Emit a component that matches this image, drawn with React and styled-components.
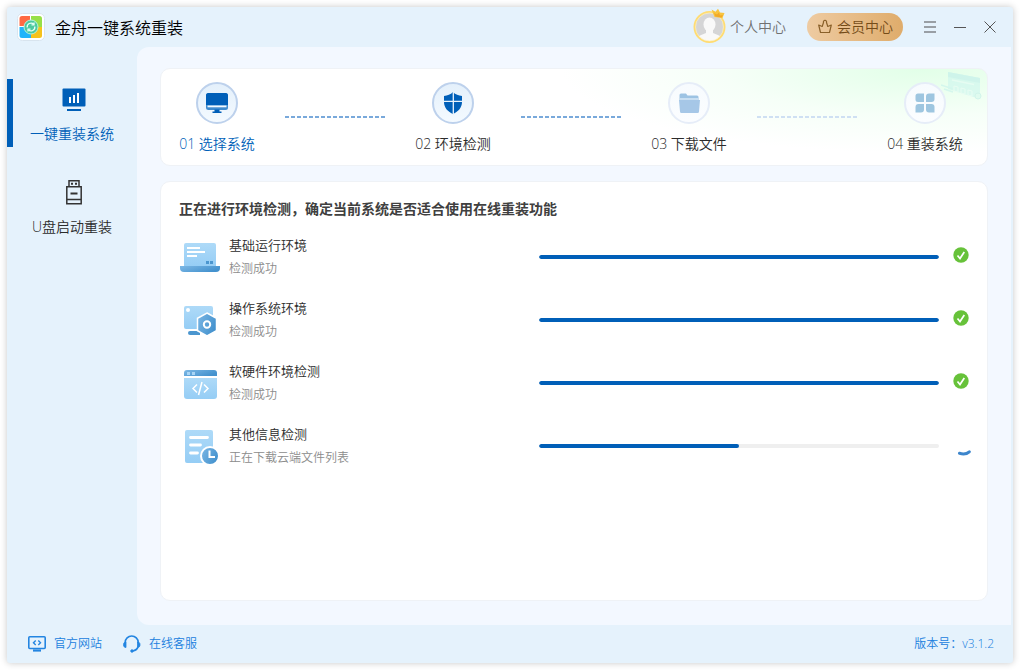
import React from 'react';
import styled, { createGlobalStyle, css } from 'styled-components';

const GlobalStyle = createGlobalStyle`
  :root {
    --primary: #005fb8;
    --link: #2080de;
    --chrome: #e5f2fc;
    --surface: #f3f8ff;
    --text: #2b2b2b;
    --muted: #8c8c8c;
  }

  * {
    box-sizing: border-box;
  }

  body {
    margin: 0;
    background: #ffffff;
    color: var(--text);
    font-family: 'Open Sans', 'Noto Sans CJK SC', sans-serif;
    font-size: 14px;
    font-weight: 350;
  }

  button {
    margin: 0;
    padding: 0;
    border: 0;
    background: none;
    color: inherit;
    font: inherit;
    cursor: pointer;
  }

  svg {
    display: block;
    flex: none;
  }
`;

const Page = styled.div`
  display: flex;
  min-height: 100vh;
  padding: 7px;
`;

const Window = styled.div`
  display: flex;
  flex: 1;
  flex-direction: column;
  min-width: 0;
  border-radius: 3px;
  background: var(--chrome);
  box-shadow: 0 0 7px rgba(0, 0, 0, 0.22);
`;

const Header = styled.header`
  display: flex;
  align-items: center;
  height: 40px;
  padding: 0 8px 0 10px;

  h1 {
    flex: 1;
    margin: 0 0 0 10px;
    padding-top: 2px;
    color: #000000;
    font-size: 16px;
    font-weight: inherit;
    line-height: 24px;
  }
`;

const UserButton = styled.button`
  display: flex;
  align-items: center;
  gap: 4px;
  margin-right: 21px;
  color: #707070;
  line-height: 20px;
`;

const VipButton = styled.button`
  display: flex;
  align-items: center;
  justify-content: center;
  gap: 4px;
  width: 96px;
  height: 28px;
  margin-right: 12px;
  border-radius: 14px;
  background: linear-gradient(90deg, #eecba2, #dfac6b);
  color: #754c18;
  line-height: 20px;
`;

const WindowButton = styled.button`
  display: flex;
  align-items: center;
  justify-content: center;
  width: 30px;
  height: 30px;
`;

const Body = styled.div`
  display: flex;
  flex: 1;
`;

const Sidebar = styled.nav`
  display: flex;
  flex-direction: column;
  gap: 25px;
  width: 130px;
  padding-top: 32px;
`;

const NavItem = styled.button`
  display: flex;
  flex-direction: column;
  align-items: center;
  gap: 10px;
  height: 68px;
  padding-top: 7px;
  line-height: 20px;

  ${({ $active }) =>
    $active &&
    css`
      color: var(--primary);
      box-shadow: inset 6px 0 0 var(--primary);
    `}
`;

const Content = styled.main`
  display: flex;
  flex: 1;
  flex-direction: column;
  gap: 15px;
  min-width: 0;
  margin-right: 2px;
  padding: 21px 23px 24px;
  border-radius: 12px 0 0 12px;
  background: var(--surface);
`;

const Card = styled.section`
  border: 1px solid #eff2f6;
  border-radius: 10px;
  background: #ffffff;
`;

const StepsCard = styled(Card)`
  position: relative;
  display: flex;
  justify-content: space-between;
  padding: 13px 23px 11px 17px;
  background: radial-gradient(ellipse 360px 84px at 92% 0, #e2ffe8, rgba(240, 255, 243, 0.6) 55%, rgba(255, 255, 255, 0)) #ffffff;
`;

const Decoration = styled.svg`
  position: absolute;
  top: 2px;
  right: 2px;
  opacity: 0.6;
`;

const Step = styled.div`
  position: relative;
  display: flex;
  flex-direction: column;
  align-items: center;
  gap: 10px;
  width: 78px;
  color: ${({ $current }) => ($current ? 'var(--primary)' : 'var(--text)')};
  line-height: 20px;
  white-space: nowrap;
`;

const StepCircle = styled.div`
  display: flex;
  align-items: center;
  justify-content: center;
  width: 42px;
  height: 42px;
  border: 2px solid ${({ $reached }) => ($reached ? '#bdd1ec' : '#e6edf8')};
  border-radius: 50%;
  background: ${({ $reached }) => ($reached ? 'linear-gradient(#e4f0fb, #f4faff)' : 'linear-gradient(#f7fbfe, #fbfdff)')};
`;

const StepLine = styled.div`
  width: 100px;
  height: 2px;
  margin-top: 34px;
  color: ${({ $reached }) => ($reached ? '#79a9db' : '#cfe0f3')};
  background: repeating-linear-gradient(
    90deg,
    currentColor 0 4px,
    transparent 4px 6px
  );
`;

const CheckCard = styled(Card)`
  flex: 1;
  padding: 17px 16px 17px 18px;

  h2 {
    margin: 0 0 18px;
    color: #404040;
    font-size: 14px;
    font-weight: bold;
    line-height: 20px;
  }
`;

const CheckList = styled.ul`
  display: flex;
  flex-direction: column;
  gap: 23px;
  margin: 0;
  padding: 0;
  list-style: none;
`;

const CheckRow = styled.li`
  display: grid;
  grid-template-columns: 40px 3fr 4fr 22px;
  column-gap: 10px;
  align-items: center;
  height: 40px;
`;

const CheckInfo = styled.div`
  display: flex;
  flex-direction: column;
  gap: 8px;
  line-height: 16px;

  label {
    font-size: 13px;
  }

  span {
    color: var(--muted);
    font-size: 12px;
  }
`;

const Progress = styled.progress`
  display: block;
  width: 100%;
  height: 4px;
  border: 0;
  border-radius: 2px;
  overflow: hidden;
  appearance: none;

  &::-webkit-progress-bar {
    background: #efefef;
  }

  &::-webkit-progress-value {
    border-radius: 2px;
    background: var(--primary);
  }
`;

const Footer = styled.footer`
  display: flex;
  align-items: center;
  gap: 20px;
  height: 38px;
  padding: 0 19px 0 20px;
  color: var(--link);
  font-size: 12px;
  line-height: 16px;

  span {
    margin-left: auto;
  }
`;

const FooterLink = styled.a`
  display: flex;
  align-items: center;
  gap: 8px;
  color: inherit;
  text-decoration: none;
`;

const Logo = () => (
  <svg width="28" height="28" viewBox="0 0 28 28">
    <rect x="0.5" y="0.5" width="27" height="27" rx="5" fill="#fff" stroke="#d8e4ee" />
    <path d="M5 3h8v10H2.500V5.500A2.500 2.500 0 0 1 5 3z" fill="#ff6a42" />
    <path d="M14 3h8.500A2.500 2.500 0 0 1 25 5.500V14H14z" fill="#97e048" />
    <path d="M2.500 14H14v11H5a2.500 2.500 0 0 1-2.500-2.500z" fill="#22b4fa" />
    <path d="M14 14h11v8.500a2.500 2.500 0 0 1-2.500 2.500H14z" fill="#f5c21c" />
    <circle cx="14" cy="14" r="7" fill="#4cc9a0" stroke="#b8f0dc" />
    <g fill="none" stroke="#e6fff5" strokeWidth="1.3">
      <path d="M10.200 14.500a3.800 3.800 0 0 1 6.500-3.200M17.800 13.500a3.800 3.800 0 0 1-6.500 3.200" />
      <path d="M17 9.500v2.300h-2.500M11 18.500v-2.300h2.500" />
    </g>
  </svg>
);

const Avatar = () => (
  <svg width="33" height="38" viewBox="0 0 33 38">
    <defs>
      <clipPath id="face">
        <circle cx="16.500" cy="19" r="14" />
      </clipPath>
    </defs>
    <circle cx="16.500" cy="19" r="15" fill="#d5d5d6" stroke="#ffdc72" strokeWidth="2" />
    <g clipPath="url(#face)" fill="#f9f9f9">
      <ellipse cx="16.500" cy="16.500" rx="6" ry="7" />
      <path d="M13 21h7v4l6 2.500c2 1 2 3 2 6H5c0-3 0-5 2-6l6-2.500z" />
    </g>
    <circle cx="16.500" cy="19" r="14" fill="none" stroke="#fff0bd" strokeWidth="0.700" />
    <path d="M18.500 1.500l4 2.300 2.500-3 2 3.700 4.500 0.500-2 5-8-1z" fill="#f8c43f" />
    <path d="M21 5l3 1.500 2-2 1 3 3-.5-1.500 2.500-6-1z" fill="#f2a928" />
  </svg>
);

const VipCrown = () => (
  <svg width="16" height="16" viewBox="0 0 16 16" fill="none" stroke="#8a602a" strokeWidth="1.200" strokeLinejoin="round">
    <path d="M3.500 13.500h9l1.800-7.500-3.500 1.500L9.500 3.500a1.600 1.600 0 1 0-3 0L5.200 7.500 1.700 6z" />
  </svg>
);

const MonitorChart = () => (
  <svg width="28" height="28" viewBox="0 0 28 28">
    <rect x="4.500" y="2.500" width="23" height="18" rx="1" fill="#005fb8" />
    <path d="M9 23h14v2H9z" fill="#005fb8" />
    <path d="M11 11h2v6h-2zM15 9h2v8h-2zM19 7h2v10h-2z" fill="#fff" />
  </svg>
);

const UsbDrive = () => (
  <svg width="28" height="28" viewBox="0 0 28 28" fill="none" stroke="#333" strokeWidth="1.500">
    <path d="M11 7.500V1.800h10v5.700M8.800 7.700h14.400v17.100H8.800zM8.800 20.500h14.400" />
    <path d="M13 4.800h2M17 4.800h2" strokeWidth="2" />
    <path d="M12.500 14.500h7" strokeWidth="2" />
  </svg>
);

const StepMonitor = () => (
  <svg width="24" height="24" viewBox="0 0 24 24">
    <rect x="1" y="2" width="22" height="17" rx="2.500" fill="#3f8bce" />
    <path d="M3.500 2h17A2.500 2.500 0 0 1 23 4.500V14H1V4.500A2.500 2.500 0 0 1 3.500 2z" fill="#005fb8" />
    <path d="M2.500 14.500h19v1.800h-19z" fill="#f2f9ff" />
    <path d="M9.500 18.500h5v2h2v1.500h-9v-1.500h2z" fill="#005fb8" />
  </svg>
);

const StepShield = () => (
  <svg width="24" height="24" viewBox="0 0 24 24">
    <path d="M12 1c2.500 2.500 5.500 3.700 9 4v6c0 5.500-3.500 9.500-9 12-5.500-2.500-9-6.500-9-12V5c3.500-.3 6.500-1.500 9-4z" fill="#005fb8" />
    <path d="M12.300 0v24M2 10.400h20" stroke="#e9f4fd" strokeWidth="1.300" />
  </svg>
);

const StepFolder = () => (
  <svg width="24" height="24" viewBox="0 0 24 24">
    <path d="M4 2.500h5l1.500 2H20a1.500 1.500 0 0 1 1.500 1.500v4h-19V4A1.500 1.500 0 0 1 4 2.500z" fill="#9dc3e3" />
    <path d="M3 7h18.500v3H3z" fill="#c9dff2" />
    <path d="M2 9h21l-1 11.500a1.500 1.500 0 0 1-1.500 1.500h-16A1.500 1.500 0 0 1 3 20.500z" fill="#a6c7e7" />
  </svg>
);

const StepTiles = () => (
  <svg width="24" height="24" viewBox="0 0 24 24" fill="#9ec6e0">
    <path d="M5 2.500h6v8.500H5a2.500 2.500 0 0 1-2.500-2.500V5A2.500 2.500 0 0 1 5 2.500z" />
    <path d="M13 5.500a3 3 0 0 1 3-3h5.500V8a3 3 0 0 1-3 3H13z" />
    <path d="M2.500 16a3 3 0 0 1 3-3H11v5.500a3 3 0 0 1-3 3H2.500z" />
    <path d="M13 13h5.500a3 3 0 0 1 3 3v5.500H16a3 3 0 0 1-3-3z" />
  </svg>
);

const GradientDefs = styled.svg`
  position: absolute;
`;

// shared gradients of the four check icons
const Gradients = () => (
  <GradientDefs width="0" height="0" aria-hidden="true">
    <defs>
      <linearGradient id="sky" x1="0" y1="0" x2="0" y2="1">
        <stop offset="0" stopColor="#aedaf8" />
        <stop offset="1" stopColor="#95cdf5" />
      </linearGradient>
      <linearGradient id="sea" x1="0" y1="0" x2="1" y2="0.5">
        <stop offset="0" stopColor="#7db8e5" />
        <stop offset="1" stopColor="#4492ce" />
      </linearGradient>
    </defs>
  </GradientDefs>
);

const LaptopIcon = () => (
  <svg width="42" height="40" viewBox="0 0 42 40">
    <path d="M7 6h28a2 2 0 0 1 2 2v22H5V8a2 2 0 0 1 2-2z" fill="url(#sky)" />
    <path d="M1 29h40v2a4 4 0 0 1-4 4H5a4 4 0 0 1-4-4z" fill="url(#sea)" />
    <path d="M8 10h13v2H8zM8 14h18v2H8zM8 18h10v2H8z" fill="#fff" />
    <path d="M27 24h3v3h-3zM31 24h3v3h-3z" fill="#4b96cf" />
  </svg>
);

const HexagonIcon = () => (
  <svg width="42" height="40" viewBox="0 0 42 40">
    <path d="M7 6h25a2 2 0 0 1 2 2v21H7a2 2 0 0 1-2-2V8a2 2 0 0 1 2-2z" fill="url(#sky)" />
    <circle cx="9" cy="10" r="2" fill="#fff" />
    <path d="M11 31h10v4H11a2 2 0 0 1 0-4z" fill="#4b96cf" />
    <path d="M28 13l9.500 5.300v12.400L28 36l-9.500-5.300V18.300z" fill="url(#sea)" stroke="#fff" strokeWidth="1.500" />
    <circle cx="28" cy="24.500" r="3.200" fill="none" stroke="#fff" strokeWidth="2" />
  </svg>
);

const CodeIcon = () => (
  <svg width="42" height="40" viewBox="0 0 42 40">
    <path d="M8 7h27a3 3 0 0 1 3 3v3H5v-3a3 3 0 0 1 3-3z" fill="url(#sea)" />
    <path d="M8 9h3v3H8zM13 9h3v3h-3z" fill="#a9d5f5" />
    <path d="M5 15h33v18a3 3 0 0 1-3 3H8a3 3 0 0 1-3-3z" fill="url(#sky)" />
    <path d="M18 21.500l-4 4 4 4M25 21.500l4 4-4 4M23 19l-3.500 13" fill="none" stroke="#fff" strokeWidth="1.500" />
  </svg>
);

const DocumentIcon = () => (
  <svg width="42" height="40" viewBox="0 0 42 40">
    <path d="M8 4h24a2 2 0 0 1 2 2v31H8a2 2 0 0 1-2-2V6a2 2 0 0 1 2-2z" fill="url(#sky)" />
    <path d="M11.500 11.500h17M11.500 19h10M11.500 27h7" stroke="#fff" strokeWidth="2.800" strokeLinecap="round" />
    <circle cx="31" cy="30" r="9" fill="url(#sea)" stroke="#fff" strokeWidth="2" />
    <path d="M30.500 24.500V31H36" fill="none" stroke="#fff" strokeWidth="2" />
  </svg>
);

const DoneIcon = () => (
  <svg width="22" height="22" viewBox="0 0 22 22" role="img">
    <circle cx="12" cy="9" r="7.700" fill="#67c23a" />
    <path d="M8.500 9.500l2.500 3 4.300-6.500" fill="none" stroke="#fff" strokeWidth="1.700" />
  </svg>
);

const LoadingIcon = () => (
  <svg width="22" height="22" viewBox="0 0 22 22" role="img">
    <path d="M10.500 18.300q6 1.800 9.800-1.500" fill="none" stroke="#3d86cc" strokeWidth="3" strokeLinecap="round" />
  </svg>
);

const WebsiteIcon = () => (
  <svg width="19" height="18" viewBox="0 0 19 18" fill="none" stroke="#2385e1" strokeWidth="1.600">
    <rect x="1.800" y="1.800" width="16.400" height="11.700" rx="1" />
    <path d="M8.700 5.500L6.500 7.700l2.200 2.200M11.300 5.500l2.200 2.200-2.200 2.200" strokeWidth="1.400" />
    <path d="M6 15.500h8" strokeWidth="2.200" />
  </svg>
);

const HeadsetIcon = () => (
  <svg width="19" height="18" viewBox="0 0 19 18" fill="none" stroke="#2385e1" strokeWidth="1.600">
    <path d="M3.200 8V7.500a6.500 6.500 0 0 1 13 0V8M16 11.500c-.5 2.500-2.500 4-5.500 4.500" />
    <path d="M4 7v5.500C2.300 12.500 1.500 11.500 1.500 9.700S2.300 7 4 7zM15.500 7v5.500c1.700 0 2.500-1 2.500-2.800S17.200 7 15.500 7z" fill="#2385e1" strokeWidth="0.800" />
    <circle cx="10" cy="16" r="1.300" fill="#2385e1" strokeWidth="0.800" />
  </svg>
);

const StepsDecoration = () => (
  <Decoration width="44" height="32" viewBox="0 0 44 32" fill="none" aria-hidden="true">
    <path d="M7 1l32 6v21L7 18z" fill="#cdf6ee" />
    <path d="M7 1l32 6v5L7 6z" fill="#bfeeea" />
    <path d="M11 9l22 4.500" stroke="#e4fbf5" strokeWidth="1.500" />
    <path d="M0 14l12 4M3 18l9 3" stroke="#c6f2ec" strokeWidth="1.500" />
    <path d="M13 15l4 1v5l-4-1zM20 17l4 1v5l-4-1zM27 19l4 1v5l-4-1z" stroke="#e6fcf5" />
    <circle cx="37" cy="25" r="3" fill="#d6faee" stroke="#bfeee6" />
  </Decoration>
);

const steps = [
  { label: '01 选择系统', Icon: StepMonitor, reached: true, current: true },
  { label: '02 环境检测', Icon: StepShield, reached: true },
  { label: '03 下载文件', Icon: StepFolder },
  { label: '04 重装系统', Icon: StepTiles },
];

const checks = [
  { id: 'runtime', title: '基础运行环境', status: '检测成功', value: 100, Icon: LaptopIcon },
  { id: 'os', title: '操作系统环境', status: '检测成功', value: 100, Icon: HexagonIcon },
  { id: 'hardware', title: '软硬件环境检测', status: '检测成功', value: 100, Icon: CodeIcon },
  { id: 'other', title: '其他信息检测', status: '正在下载云端文件列表', value: 50, Icon: DocumentIcon },
];

const CheckItem = ({ id, title, status, value, Icon }) => (
  <CheckRow>
    <Icon />
    <CheckInfo>
      <label htmlFor={id}>{title}</label>
      <span>{status}</span>
    </CheckInfo>
    <Progress id={id} value={value} max="100" />
    {value === 100 ? <DoneIcon /> : <LoadingIcon />}
  </CheckRow>
);

const App = () => {
  return (
    <Page lang="zh-CN">
      <GlobalStyle />
      <Gradients />
      <Window>
        <Header>
          <Logo />
          <h1>金舟一键系统重装</h1>
          <UserButton type="button">
            <Avatar />
            个人中心
          </UserButton>
          <VipButton type="button">
            <VipCrown />
            会员中心
          </VipButton>
          <WindowButton type="button" aria-label="菜单">
            <svg width="12" height="12" viewBox="0 0 12 12" stroke="#999fa5" strokeWidth="2">
              <path d="M0 1h12M0 6h12M0 11h12" />
            </svg>
          </WindowButton>
          <WindowButton type="button" aria-label="最小化">
            <svg width="12" height="12" viewBox="0 0 12 12" stroke="#555">
              <path d="M0 6.500h12" />
            </svg>
          </WindowButton>
          <WindowButton type="button" aria-label="关闭">
            <svg width="12" height="12" viewBox="0 0 12 12" stroke="#555">
              <path d="M0.500 0.500l11 11M11.500 0.500l-11 11" />
            </svg>
          </WindowButton>
        </Header>
        <Body>
          <Sidebar>
            <NavItem type="button" $active>
              <MonitorChart />
              一键重装系统
            </NavItem>
            <NavItem type="button">
              <UsbDrive />
              U盘启动重装
            </NavItem>
          </Sidebar>
          <Content>
            <StepsCard>
              <StepsDecoration />
              {steps.map(({ label, Icon, reached, current }, index) => (
                <React.Fragment key={label}>
                  <Step $current={current}>
                    <StepCircle $reached={reached}>
                      <Icon />
                    </StepCircle>
                    {label}
                  </Step>
                  {index < steps.length - 1 && <StepLine $reached={reached} />}
                </React.Fragment>
              ))}
            </StepsCard>
            <CheckCard>
              <h2>正在进行环境检测，确定当前系统是否适合使用在线重装功能</h2>
              <CheckList>
                {checks.map((check) => (
                  <CheckItem key={check.id} {...check} />
                ))}
              </CheckList>
            </CheckCard>
          </Content>
        </Body>
        <Footer>
          <FooterLink href="#website">
            <WebsiteIcon />
            官方网站
          </FooterLink>
          <FooterLink href="#service">
            <HeadsetIcon />
            在线客服
          </FooterLink>
          <span>版本号：v3.1.2</span>
        </Footer>
      </Window>
    </Page>
  );
};

export default App;
